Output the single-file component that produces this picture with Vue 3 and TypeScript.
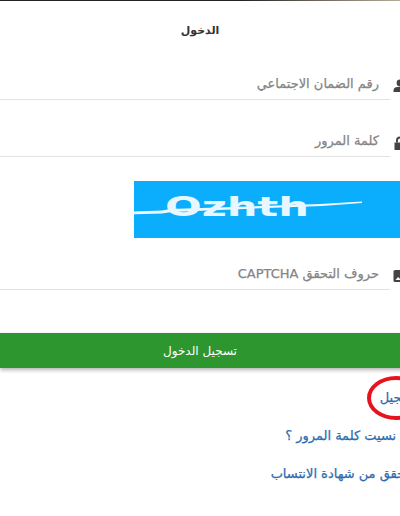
<script setup lang="ts">
const fields = [
  { label: 'رقم الضمان الاجتماعي', icon: 'user' },
  { label: 'كلمة المرور', icon: 'lock' },
]
</script>

<template>
  <div class="page">
    <div class="topbar"></div>
    <div class="sheet">
      <h1 class="title">الدخول</h1>

      <div v-for="f in fields" :key="f.icon" class="field">
        <svg v-if="f.icon === 'user'" class="icon" viewBox="0 0 14 14">
          <circle cx="7" cy="4" r="3.4" />
          <path d="M0.5 13v-1.6C0.5 9.2 2.4 8 4.4 8h5.2c2 0 3.9 1.2 3.9 3.4V13z" />
        </svg>
        <svg v-else class="icon" viewBox="0 0 14 14">
          <path d="M3 6.5V4.4a4 4 0 0 1 8 0v2.1h-1.9V4.5a2.1 2.1 0 0 0-4.2 0v2z" />
          <path d="M1.5 6.5h11V14h-11z" />
        </svg>
        <div class="input"><span>{{ f.label }}</span></div>
      </div>

      <div class="captcha-row">
        <div class="captcha">
          <svg class="noise" viewBox="0 0 266 57" preserveAspectRatio="none">
            <path d="M0 30.5l28-1 8-1.500 150-5 42-2.500 0 1.400-40 3-150 6-10 1.500-28 .8z" />
          </svg>
          <span class="captcha-text">Ozhth</span>
        </div>
      </div>

      <div class="field third">
        <svg class="icon" viewBox="0 0 14 14">
          <rect x="0.5" y="1" width="13" height="12" rx="1.6" />
          <path class="cut" d="M2.5 11l2.6-3 1.800 1.800 2.400-3 2.200 4.200z" />
        </svg>
        <div class="input"><span dir="rtl">حروف التحقق CAPTCHA</span></div>
      </div>

      <button class="submit" type="button">تسجيل الدخول</button>

      <div class="links">
        <a class="link">تسجيل</a>
        <a class="link">هل نسيت كلمة المرور ؟</a>
        <a class="link">التحقق من شهادة الانتساب</a>
      </div>
    </div>
    <div class="ring"></div>
  </div>
</template>

<style>
html, body { margin: 0; background: #fff; }
</style>

<style scoped>
.page {
  position: relative;
  width: 400px;
  height: 516px;
  overflow: hidden;
  background: #fff;
  font-family: "DejaVu Sans", sans-serif;
}
.topbar {
  height: 1px;
  background: linear-gradient(90deg, #222 0%, #222 60%, #b8ab98 100%);
}
.sheet {
  width: 420px;
  direction: rtl;
}
.title {
  margin: 0 20px 0 0;
  width: 400px;
  height: 58px;
  box-sizing: border-box;
  padding-top: 21px;
  text-align: center;
  font-size: 11px;
  line-height: 17px;
  font-weight: 700;
  color: #333;
}
.field {
  display: flex;
  align-items: flex-end;
  height: 41px;
  margin-bottom: 16px;
}
.icon {
  flex: none;
  width: 14px;
  height: 14px;
  margin: 0 13px 7px 3px;
  fill: #444;
}
.cut { fill: #fff; }
.input {
  flex: 1;
  height: 100%;
  box-sizing: border-box;
  border-bottom: 1px solid #e2e2e2;
  display: flex;
  align-items: flex-end;
  padding: 0 11px 6px 0;
  font-size: 13px;
  line-height: 18px;
  color: #858585;
  -webkit-text-stroke: 0.25px #858585;
}
.captcha-row {
  width: 400px;
  margin: 24px 20px 0 0;
  direction: ltr;
  padding-left: 134px;
  box-sizing: border-box;
}
.captcha {
  position: relative;
  height: 57px;
  background: #0aaefc;
  overflow: hidden;
}
.noise {
  position: absolute;
  inset: 0;
  width: 100%;
  height: 100%;
  fill: #eef9ff;
}
.captcha-text {
  position: absolute;
  left: 31px;
  top: 8px;
  font-weight: 700;
  font-size: 27px;
  line-height: 36px;
  color: #e8f7ff;
  transform: scaleX(1.6);
  transform-origin: left center;
}
.third { margin-top: 11px; margin-bottom: 0; }
.submit {
  display: block;
  width: 420px;
  height: 35px;
  margin-top: 43px;
  border: 0;
  padding: 0 20px 0 0;
  background: #2e962f;
  color: #fff;
  font-family: inherit;
  font-size: 12px;
  box-shadow: 0 2px 4px rgba(0, 0, 0, 0.3);
}
.links {
  display: flex;
  flex-direction: column;
  gap: 20px;
  margin-top: 21px;
  padding-right: 3px;
}
.link {
  font-size: 13px;
  line-height: 18px;
  color: #2f6cae;
  -webkit-text-stroke: 0.25px #2f6cae;
}
.ring {
  position: absolute;
  left: 367px;
  top: 376px;
  width: 58px;
  height: 44px;
  box-sizing: border-box;
  border: 4px solid #e8121f;
  border-radius: 50%;
}
</style>
